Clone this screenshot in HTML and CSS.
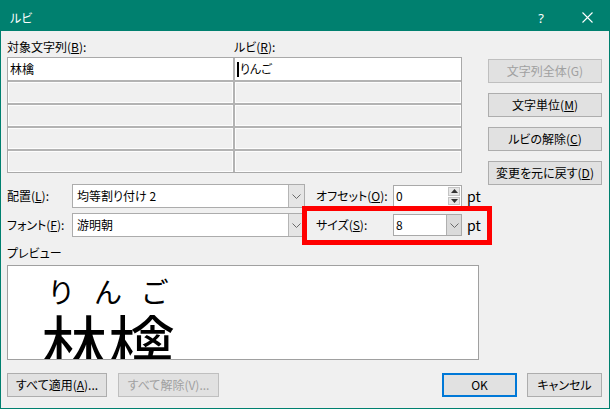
FILE: index.html
```html
<!DOCTYPE html>
<html lang="ja">
<head>
<meta charset="utf-8">
<title>ルビ</title>
<link rel="stylesheet" href="styles.css">
</head>
<body>
<div class="window">
  <div class="titlebar">
    <span class="title">ルビ</span>
    <span class="help">?</span>
    <span class="close"><svg width="11" height="11" viewBox="0 0 11 11"><path d="M0.5 0.5L10.5 10.5M10.5 0.5L0.5 10.5" stroke="#fff" stroke-width="1.1" fill="none"/></svg></span>
  </div>
  <div class="content">
    <div class="upper">
      <div class="table-area">
        <div class="col-labels">
          <span class="col-label first">対象文字列(<u>B</u>):</span>
          <span class="col-label">ルビ(<u>R</u>):</span>
        </div>
        <div class="ruby-table">
          <div class="cell edit">林檎</div>
          <div class="cell edit"><span class="caret"></span>りんご</div>
          <div class="cell"></div><div class="cell"></div>
          <div class="cell"></div><div class="cell"></div>
          <div class="cell"></div><div class="cell"></div>
          <div class="cell"></div><div class="cell"></div>
        </div>
      </div>
      <div class="side-buttons">
        <button class="btn disabled">文字列全体(G)</button>
        <button class="btn">文字単位(<u>M</u>)</button>
        <button class="btn">ルビの解除(<u>C</u>)</button>
        <button class="btn">変更を元に戻す(<u>D</u>)</button>
      </div>
      <div class="options">
        <span class="opt-label">配置(<u>L</u>):</span>
        <div class="combo"><span class="combo-text">均等割り付け 2</span><span class="combo-btn"><svg width="9" height="5" viewBox="0 0 9 5"><path d="M0.5 0.5L4.5 4.5L8.5 0.5" stroke="#6a6a6a" fill="none"/></svg></span></div>
        <span class="opt-label right">オフセット(<u>O</u>):</span>
        <div class="field"><span class="field-text">0</span><span class="spinner"><span class="spin-btn"><svg width="7" height="4" viewBox="0 0 7 4"><path d="M0 4L3.5 0L7 4Z" fill="#333"/></svg></span><span class="spin-btn"><svg width="7" height="4" viewBox="0 0 7 4"><path d="M0 0L3.5 4L7 0Z" fill="#333"/></svg></span></span></div>
        <span class="unit">pt</span>

        <span class="opt-label">フォント(<u>F</u>):</span>
        <div class="combo"><span class="combo-text">游明朝</span><span class="combo-btn"><svg width="9" height="5" viewBox="0 0 9 5"><path d="M0.5 0.5L4.5 4.5L8.5 0.5" stroke="#6a6a6a" fill="none"/></svg></span></div>
        <span class="opt-label right">サイズ(<u>S</u>):</span>
        <div class="field"><span class="field-text">8</span><span class="drop"><svg width="9" height="5" viewBox="0 0 9 5"><path d="M0.5 0.5L4.5 4.5L8.5 0.5" stroke="#6a6a6a" fill="none"/></svg></span></div>
        <span class="unit">pt</span>

        <div class="highlight"></div>
      </div>
    </div>
    <div class="preview-label">プレビュー</div>
    <div class="preview">
      <div class="ruby-line"><span>り</span><span>ん</span><span>ご</span></div>
      <div class="base-line">林檎</div>
    </div>
    <div class="bottom">
      <button class="btn b-apply">すべて適用(<u>A</u>)...</button>
      <button class="btn disabled b-clear">すべて解除(V)...</button>
      <button class="btn default b-ok">OK</button>
      <button class="btn b-cancel">キャンセル</button>
    </div>
  </div>
</div>
</body>
</html>
```
FILE: styles.css
```css
* { box-sizing: border-box; }
html, body { margin: 0; padding: 0; }
body {
  width: 610px;
  height: 409px;
  overflow: hidden;
  background: #f0f0f0;
  font-family: "Noto Sans CJK JP", "Noto Sans", sans-serif;
  font-size: 12px;
  line-height: 16px;
  color: #000;
  font-feature-settings: "palt";
}
u { text-decoration: underline; text-underline-offset: 1px; }

.window {
  width: 610px;
  height: 409px;
  border: 1px solid #00806f;
  border-top: 0;
  background: #f0f0f0;
}

.titlebar {
  height: 31px;
  margin: 0 -1px;
  background: #00806f;
  color: #fff;
  display: flex;
  align-items: center;
  padding: 4px 0 0 10px;
}
.title { flex: 1; font-size: 12px; }
.help { width: 46px; text-align: center; font-size: 13px; font-family: "Noto Sans", sans-serif; }
.close { width: 46px; display: flex; justify-content: center; align-items: center; }

.content { padding: 8px 7px 0 6px; }

.upper {
  display: grid;
  grid-template-columns: 455px 114px;
  column-gap: 26px;
  row-gap: 11px;
}
.table-area { grid-column: 1; grid-row: 1; }
.col-labels { display: flex; height: 16px; margin-bottom: 2px; }
.col-label.first { width: 227px; }

.ruby-table {
  display: grid;
  grid-template-columns: 225px 226px;
  grid-template-rows: 22px repeat(4, 21px);
  gap: 2px;
  border: 1px solid #a9a9a9;
  background: #b3b3b3;
}
.cell { background: #f0f0f0; box-shadow: inset 0 0 0 1px #fdfdfd; }
.cell.edit {
  background: #fff;
  box-shadow: none;
  padding-left: 2px;
  display: flex;
  align-items: center;
}
.caret {
  display: inline-block;
  width: 2px;
  height: 15px;
  background: #000;
  margin-right: 1px;
}

.side-buttons {
  grid-column: 2;
  grid-row: 1 / span 2;
  display: flex;
  flex-direction: column;
  gap: 10px;
  padding-top: 20px;
}

.btn {
  height: 24px;
  margin: 0;
  padding: 0;
  background: #e1e1e1;
  border: 1px solid #adadad;
  font: inherit;
  color: #000;
  display: flex;
  align-items: center;
  justify-content: center;
  white-space: nowrap;
}
.btn.disabled { color: #a0a0a0; border-color: #bfbfbf; }
.btn.default { border: 2px solid #0078d7; }

.options {
  grid-column: 1;
  grid-row: 2;
  position: relative;
  display: grid;
  grid-template-columns: 65px 233px 88px 69px auto;
  grid-template-rows: 24px 24px;
  row-gap: 5px;
  align-items: center;
}
.opt-label.right { padding-left: 11px; }
.combo {
  display: flex;
  height: 24px;
  border: 1px solid #acacac;
  background: #fff;
}
.combo-text { flex: 1; padding-left: 4px; line-height: 22px; }
.combo-btn {
  width: 16px;
  background: #e5e5e5;
  border-left: 1px solid #b5b5b5;
  display: flex;
  align-items: center;
  justify-content: center;
}
.field {
  display: flex;
  height: 22px;
  border: 1px solid #a9a9a9;
  background: #fff;
}
.field-text { flex: 1; padding-left: 2px; line-height: 20px; }
.spinner {
  width: 14px;
  display: flex;
  flex-direction: column;
  gap: 1px;
  padding: 1px;
  background: #fff;
}
.spin-btn {
  flex: 1;
  background: #e6e6e6;
  border: 1px solid #c4c4c4;
  display: flex;
  align-items: center;
  justify-content: center;
}
.drop {
  width: 15px;
  background: #dadada;
  border-left: 1px solid #b0b0b0;
  display: flex;
  align-items: center;
  justify-content: center;
}
.unit { padding-left: 5px; font-size: 14px; }

.highlight {
  position: absolute;
  left: 295px;
  top: 22px;
  width: 190px;
  height: 39px;
  border: 5px solid #ff0000;
  pointer-events: none;
}

.preview-label { margin-top: 8px; }
.preview {
  margin-top: 4px;
  width: 472px;
  height: 95px;
  border: 1px solid #a0a0a0;
  background: #fff;
  overflow: hidden;
  padding-top: 11px;
}
.ruby-line {
  display: flex;
  justify-content: space-around;
  width: 140px;
  margin-left: 30px;
  font-size: 28px;
  line-height: 28px;
  font-feature-settings: normal;
}
.base-line {
  margin-left: 33px;
  margin-top: 4px;
  font-size: 67px;
  line-height: 67px;
  white-space: nowrap;
}

.bottom { display: flex; margin-top: 13px; }
.b-apply { width: 100px; }
.b-clear { width: 101px; margin-left: 11px; }
.b-ok { width: 75px; margin-left: auto; }
.b-cancel { width: 75px; margin-left: 10px; }
```
